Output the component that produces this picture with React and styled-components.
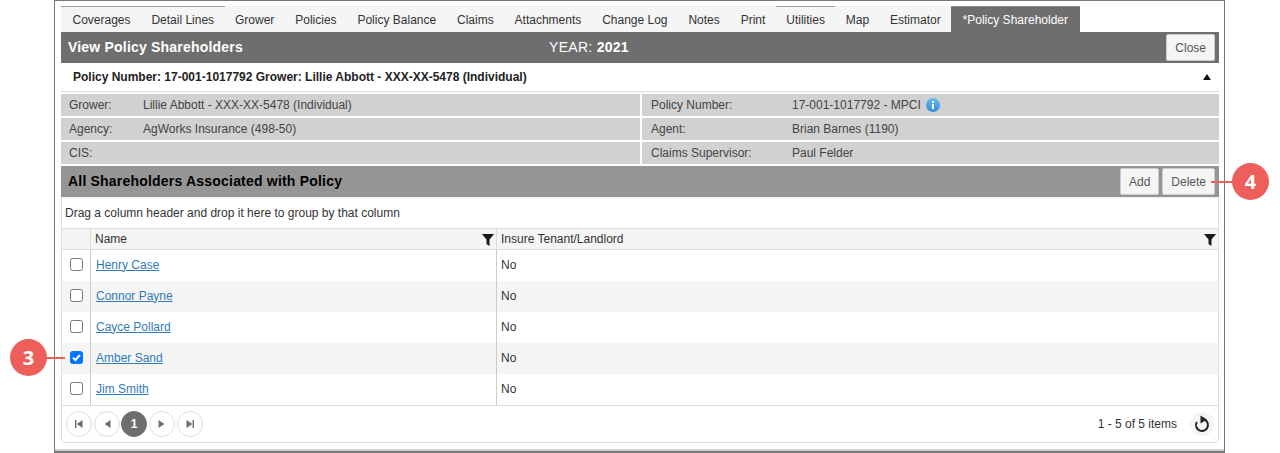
import React from "react";
import styled, { createGlobalStyle } from "styled-components";

const Global = createGlobalStyle`
  html, body { margin: 0; padding: 0; background: #fff; }
  body { font-family: "Liberation Sans", Arial, sans-serif; font-size: 12px; color: #333; }
`;

const Page = styled.div`
  width: 1280px;
  height: 453px;
  overflow: hidden;
  padding-left: 54px;
  box-sizing: border-box;
`;

const Frame = styled.div`
  width: 1171px;
  height: 453px;
  box-sizing: border-box;
  border: 1px solid #777;
  border-bottom-width: 2px;
  padding: 5px 5px 0 6px;
  position: relative;
  box-shadow: inset 0 -2px 0 #d0d0d0;
`;

const Tabs = styled.div`
  display: flex;
  height: 26px;
`;

const Tab = styled.div`
  box-sizing: border-box;
  height: 26px;
  padding: 0 10.45px;
  display: flex;
  align-items: center;
  background: ${p => (p.$active ? "#6e6e6e" : "#f5f5f5")};
  color: ${p => (p.$active ? "#fff" : "#333")};
  white-space: nowrap;
  border-top: 1px solid ${p => (p.$line ? "#999" : "#f5f5f5")};
  ${p => p.$active && "border-top-color:#888; padding: 0 11.5px;"}
  &:first-child { padding-left: 11.5px; }
`;

const HeadBar = styled.div`
  height: 31px;
  background: #6e6e6e;
  display: flex;
  align-items: center;
  justify-content: space-between;
  padding: 0 4px 0 7px;
  color: #fff;
`;

const Title = styled.div`
  font-size: 14px;
  font-weight: 700;
  letter-spacing: 0.2px;
  width: 481px;
  white-space: nowrap;
  margin-bottom: 2px;
`;

const Year = styled.div`
  font-size: 14px;
  flex: 1;
  white-space: nowrap;
  letter-spacing: 0.3px;
  margin-bottom: 2px;
  b { font-weight: 700; letter-spacing: 0.2px; }
`;

const Btn = styled.button`
  box-sizing: border-box;
  height: 27px;
  padding: 0 8px;
  background: #f5f5f5;
  border: 1px solid #ccc;
  border-radius: 2px;
  color: #555;
  font: 12px "Liberation Sans", Arial, sans-serif;
`;

const Accordion = styled.div`
  height: 29px;
  box-sizing: border-box;
  display: flex;
  align-items: center;
  justify-content: space-between;
  padding: 0 8px 1px 12px;
  font-weight: 700;
  color: #222;
  border-bottom: 1px solid #ddd;
`;

const Caret = styled.span`
  width: 0; height: 0;
  border-left: 4px solid transparent;
  border-right: 4px solid transparent;
  border-bottom: 6px solid #111;
`;

const Info = styled.div`
  display: grid;
  grid-template-columns: 579px 579px;
  row-gap: 2px;
  margin: 2px 0;
`;

const InfoCell = styled.div`
  height: 22px;
  background: #d1d1d1;
  display: flex;
  align-items: center;
  padding-left: ${p => (p.$right ? 9 : 8)}px;
  margin-left: ${p => (p.$right ? 2 : 0)}px;
  color: #444;
  white-space: nowrap;
`;

const InfoLabel = styled.span`
  width: ${p => p.$w}px;
  flex: none;
`;

const InfoIcon = styled.svg`
  margin-left: 5px;
`;

const SectionBar = styled.div`
  height: 31px;
  background: #959595;
  display: flex;
  align-items: center;
  justify-content: space-between;
  padding: 0 4px 0 7px;
  color: #000;
`;

const SectionTitle = styled.div`
  font-size: 14px;
  font-weight: 700;
  letter-spacing: 0.2px;
  margin-bottom: 2px;
`;

const Buttons = styled.div`
  display: flex;
  gap: 3px;
`;

const Grid = styled.div`
  box-sizing: border-box;
  height: 246px;
  border: 1px solid #ddd;
  border-top-color: #eee;
  border-radius: 0 4px 4px 4px;
  display: flex;
  flex-direction: column;
`;

const GroupHint = styled.div`
  height: 31px;
  box-sizing: border-box;
  padding-left: 3px;
  display: flex;
  align-items: center;
  border-bottom: 1px solid #ddd;
  color: #333;
`;

const Row = styled.div`
  display: grid;
  grid-template-columns: 28px 406px 1fr;
  height: ${p => p.$h || 31}px;
  background: ${p => (p.$alt ? "#f5f5f5" : "#fff")};
  align-items: stretch;
  ${p => p.$head && "box-sizing:border-box;border-bottom:1px solid #ddd;"}
`;

const Cell = styled.div`
  display: flex;
  align-items: center;
  padding-left: 4px;
  padding-bottom: ${p => (p.$head ? 0 : 2)}px;
  border-left: 1px solid ${p => (p.$head ? "#ddd" : "#ccc")};
  justify-content: ${p => (p.$between ? "space-between" : "flex-start")};
  ${p => p.$between && "padding-right:2px;"}
  color: #333;
`;

const CheckCell = styled.div`
  display: flex;
  align-items: center;
  justify-content: center;
  padding-left: 1px;
  padding-bottom: 2px;
`;

const Check = styled.span`
  box-sizing: border-box;
  width: 13px;
  height: 13px;
  border-radius: 2.5px;
  border: 1px solid ${p => (p.$on ? "#0075ff" : "#767676")};
  background: ${p => (p.$on ? "#0075ff" : "#fff")};
  display: flex;
  align-items: center;
  justify-content: center;
`;

const NameLink = styled.a`
  color: #337ab7;
  text-decoration: underline;
  padding-left: 1px;
`;

const Pager = styled.div`
  flex: 1;
  border-top: 1px solid #ddd;
  display: flex;
  align-items: center;
  justify-content: space-between;
  padding: 0 4px;
`;

const PagerLeft = styled.div`
  display: flex;
  gap: 2px;
`;

const PageBtn = styled.span`
  box-sizing: border-box;
  width: 26px;
  height: 26px;
  border-radius: 50%;
  border: 1px solid ${p => (p.$on ? "#6e6e6e" : "#ddd")};
  background: ${p => (p.$on ? "#6e6e6e" : "#fff")};
  color: #fff;
  font-weight: 700;
  display: flex;
  align-items: center;
  justify-content: center;
  ${p => p.$on && "margin-left:-1px;"}
`;

const PagerRight = styled.div`
  display: flex;
  align-items: center;
  gap: 13px;
  color: #333;
`;

const Refresh = styled.span`
  width: 24px;
  height: 24px;
  border-radius: 50%;
  background: #f5f5f5;
  display: flex;
`;

const Callout = styled.div`
  position: absolute;
  top: ${p => p.$top}px;
  left: ${p => p.$left}px;
  display: flex;
  align-items: center;
`;

const Badge = styled.span`
  width: 37px;
  height: 37px;
  border-radius: 50%;
  background: #ee5f5b;
  color: #fff;
  font: 700 20px "Open Sans", "Liberation Sans", sans-serif;
  display: flex;
  align-items: center;
  justify-content: center;
`;

const Lead = styled.span`
  height: 2px;
  width: ${p => p.$w}px;
  background: #ee5f5b;
`;

const tabs = [
  ["Coverages", true], ["Detail Lines", true], ["Grower"], ["Policies"], ["Policy Balance"], ["Claims"],
  ["Attachments"], ["Change Log"], ["Notes"], ["Print"], ["Utilities", true], ["Map"], ["Estimator"],
];

const people = ["Henry Case", "Connor Payne", "Cayce Pollard", "Amber Sand", "Jim Smith"];

const Funnel = () => (
  <svg width="12" height="13" viewBox="0 0 12 13"><path d="M0 1h12L7.5 6.5V13L4.5 11V6.5z" fill="#1a1a1a" /></svg>
);

const Arrow = ({ dir, bar }) => (
  <svg width="10" height="10" viewBox="0 0 10 10" fill="#6e6e6e">
    {dir === "l" ? <path d="M8.5 1v8L2.7 5z" /> : <path d="M1.5 1v8L7.3 5z" />}
    {bar && (dir === "l" ? <rect x="1" y="1" width="1.4" height="8" /> : <rect x="7.6" y="1" width="1.4" height="8" />)}
  </svg>
);

export default function App() {
  return (
    <Page>
      <Global />
      <Frame>
        <Tabs>
          {tabs.map(([t, line]) => <Tab key={t} $line={line}>{t}</Tab>)}
          <Tab $active>*Policy Shareholder</Tab>
        </Tabs>
        <HeadBar>
          <Title>View Policy Shareholders</Title>
          <Year>YEAR: <b>2021</b></Year>
          <Btn>Close</Btn>
        </HeadBar>
        <Accordion>
          <span>Policy Number: 17-001-1017792 Grower: Lillie Abbott - XXX-XX-5478 (Individual)</span>
          <Caret />
        </Accordion>
        <Info>
          <InfoCell><InfoLabel $w={74}>Grower:</InfoLabel>Lillie Abbott - XXX-XX-5478 (Individual)</InfoCell>
          <InfoCell $right><InfoLabel $w={141}>Policy Number:</InfoLabel>17-001-1017792 - MPCI
            <InfoIcon width="14" height="14" viewBox="0 0 14 14">
              <defs><linearGradient id="ig" x1="0" y1="0" x2="0" y2="1"><stop offset="0" stopColor="#6cbcec" /><stop offset="1" stopColor="#2f8fd6" /></linearGradient></defs>
              <circle cx="7" cy="7" r="7" fill="url(#ig)" />
              <rect x="6" y="6" width="2" height="5" fill="#fff" />
              <rect x="6" y="3" width="2" height="2" fill="#fff" />
            </InfoIcon>
          </InfoCell>
          <InfoCell><InfoLabel $w={74}>Agency:</InfoLabel>AgWorks Insurance (498-50)</InfoCell>
          <InfoCell $right><InfoLabel $w={141}>Agent:</InfoLabel>Brian Barnes (1190)</InfoCell>
          <InfoCell>CIS:</InfoCell>
          <InfoCell $right><InfoLabel $w={141}>Claims Supervisor:</InfoLabel>Paul Felder</InfoCell>
        </Info>
        <SectionBar>
          <SectionTitle>All Shareholders Associated with Policy</SectionTitle>
          <Buttons>
            <Btn>Add</Btn>
            <Btn>Delete</Btn>
          </Buttons>
        </SectionBar>
        <Grid>
          <GroupHint>Drag a column header and drop it here to group by that column</GroupHint>
          <Row $head $alt $h={21}>
            <div />
            <Cell $head $between>Name<Funnel /></Cell>
            <Cell $head $between>Insure Tenant/Landlord<Funnel /></Cell>
          </Row>
          {people.map((p, i) => (
            <Row key={p} $alt={i % 2 === 1}>
              <CheckCell>
                <Check $on={p === "Amber Sand"}>
                  {p === "Amber Sand" && (
                    <svg width="11" height="11" viewBox="0 0 11 11"><path d="M2 5.6l2.4 2.4L9 3" fill="none" stroke="#fff" strokeWidth="2" /></svg>
                  )}
                </Check>
              </CheckCell>
              <Cell><NameLink>{p}</NameLink></Cell>
              <Cell>No</Cell>
            </Row>
          ))}
          <Pager>
            <PagerLeft>
              <PageBtn><Arrow dir="l" bar /></PageBtn>
              <PageBtn><Arrow dir="l" /></PageBtn>
              <PageBtn $on>1</PageBtn>
              <PageBtn><Arrow dir="r" /></PageBtn>
              <PageBtn><Arrow dir="r" bar /></PageBtn>
            </PagerLeft>
            <PagerRight>
              <span>1 - 5 of 5 items</span>
              <Refresh>
                <svg width="24" height="24" viewBox="0 0 24 24" fill="none">
                  <path d="M6.8 10A6 6 0 1 0 12 7" stroke="#222" strokeWidth="2" />
                  <path d="M10.5 3.5L17 7.5L10.5 11.5z" fill="#222" />
                </svg>
              </Refresh>
            </PagerRight>
          </Pager>
        </Grid>
        <Callout $top={338} $left={-45}><Badge>3</Badge><Lead $w={18} /></Callout>
        <Callout $top={162} $left={1156}><Lead $w={21} /><Badge>4</Badge></Callout>
      </Frame>
    </Page>
  );
}
